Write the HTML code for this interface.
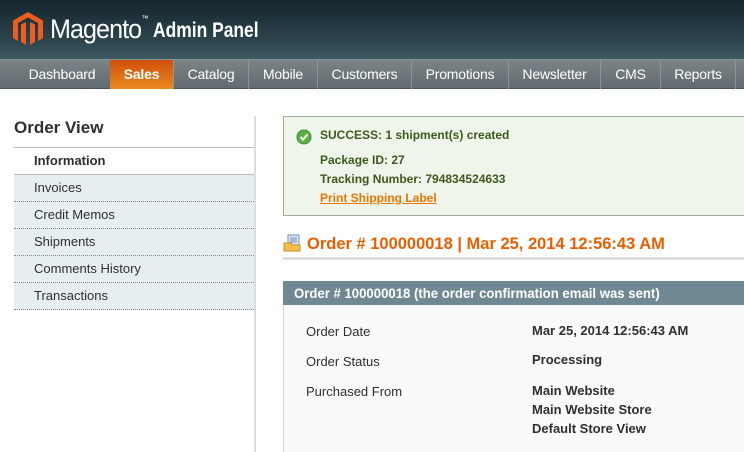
<!DOCTYPE html>
<html><head><style>
*{margin:0;padding:0;box-sizing:border-box}
body{width:744px;height:452px;overflow:hidden;background:#fff;font-family:"Liberation Sans",Arial,sans-serif;position:relative}
.hdr{position:absolute;left:0;top:0;width:744px;height:59px;background:linear-gradient(#14252c,#2e454e 70%,#3d5962)}
.nav{position:absolute;left:0;top:59px;width:744px;height:30px;background:linear-gradient(#7a8487,#626c70);border-top:1px solid #87969a;border-bottom:1px solid #4a5356}
.nav span{position:absolute;top:0;height:29px;line-height:28px;color:#fff;font-size:14px;text-align:center;border-right:1px solid #8a9497;letter-spacing:-0.2px}
.nav .act{background:linear-gradient(#cf4f0b,#ea8920);font-weight:bold}
.sb{position:absolute;left:14px;top:116px;width:242px;border-right:2px solid #ddd;height:336px}
.sb h2{font-size:17px;color:#2f2f2f;padding:2px 0 0 0;height:32px;border-bottom:1px solid #bbb}
.sb div{height:27px;line-height:26px;padding-left:20px;font-size:13px;color:#2f2f2f;background:#e7eef0;border-bottom:1px dotted #888}
.sb .cur{background:#fff;font-weight:bold;border-bottom:1px solid #bbb}
.msg{position:absolute;left:283px;top:116px;width:470px;height:100px;background:#eff5ea;border:1px solid #9fae94;color:#3d5a1e;font-size:12px;font-weight:bold}
.msg p{position:absolute;left:36px}
</style></head><body>
<div class="hdr">
<svg style="position:absolute;left:13px;top:12px" width="30" height="34" viewBox="0 0 30 34"><path d="M15 0 L30 8.5 V26 L25 29 V11 L15 5.5 L5 11 V29 L0 26 V8.5Z M8 12.5 L13 10 V33 L10 31 L8 30Z M22 12.5 L17 10 V33 L20 31 L22 30Z" fill="#ef5c1f"/></svg>
<div style="position:absolute;left:50px;top:14px;color:#fff;font-size:27px;letter-spacing:-1px;transform:scaleX(0.93);transform-origin:left">Magento<span style="font-size:8px;vertical-align:top;letter-spacing:0">™</span></div>
<div style="position:absolute;left:153px;top:19px;color:#fff;font-size:21px;font-weight:bold;transform:scaleX(0.83);transform-origin:left">Admin Panel</div>
</div>
<div class="nav">
<span style="left:14px;width:97px">Dashboard</span>
<span class="act" style="left:110px;width:64px">Sales</span>
<span style="left:174px;width:75px">Catalog</span>
<span style="left:249px;width:69px">Mobile</span>
<span style="left:318px;width:94px">Customers</span>
<span style="left:412px;width:97px">Promotions</span>
<span style="left:509px;width:92px">Newsletter</span>
<span style="left:601px;width:60px">CMS</span>
<span style="left:661px;width:75px">Reports</span>
</div>
<div class="sb">
<h2>Order View</h2>
<div class="cur">Information</div>
<div>Invoices</div><div>Credit Memos</div><div>Shipments</div><div>Comments History</div><div>Transactions</div>
</div>
<div class="msg">
<svg style="position:absolute;left:12px;top:12px" width="16" height="16"><circle cx="8" cy="8" r="7" fill="#5cb045" stroke="#3d8a2d"/><path d="M4.5 8 L7 10.5 L11.5 5.5" stroke="#fff" stroke-width="2" fill="none"/></svg>
<p style="top:11px">SUCCESS: 1 shipment(s) created</p>
<p style="top:36px">Package ID: 27</p>
<p style="top:55px">Tracking Number: 794834524633</p>
<p style="top:74px;color:#ea7601;text-decoration:underline">Print Shipping Label</p>
</div>
<svg style="position:absolute;left:283px;top:234px" width="18" height="18"><rect x="5" y="1" width="11" height="12" fill="#dfe9f5" stroke="#6a8bb8"/><path d="M7 4h7M7 6h7M7 8h7" stroke="#6a8bb8"/><path d="M1 9h7l1 2h8v6H1z" fill="#f4c04b" stroke="#c98e1d"/></svg>
<div style="position:absolute;left:307px;top:234px;color:#eb5e00;font-size:17px;font-weight:bold;transform:scaleX(0.97);transform-origin:left">Order # 100000018 | Mar 25, 2014 12:56:43 AM</div>
<div style="position:absolute;left:283px;top:257px;width:461px;height:3px;background:#ddd"></div>
<div style="position:absolute;left:283px;top:281px;width:461px;height:24px;background:#6f8892;color:#fff;font-size:14px;font-weight:bold;line-height:24px;padding-left:11px"><span style="display:inline-block;transform:scaleX(0.94);transform-origin:left">Order # 100000018 (the order confirmation email was sent)</span></div>
<div style="position:absolute;left:283px;top:305px;width:461px;height:147px;background:#fafafa;border-left:1px solid #d5d5d5;font-size:13px;color:#2f2f2f">
<div style="position:absolute;left:22px;top:19px">Order Date</div>
<div style="position:absolute;left:22px;top:49px">Order Status</div>
<div style="position:absolute;left:22px;top:79px">Purchased From</div>
<div style="position:absolute;left:248px;top:16px;font-weight:bold;line-height:19px">Mar 25, 2014 12:56:43 AM</div>
<div style="position:absolute;left:248px;top:47px;font-weight:bold">Processing</div>
<div style="position:absolute;left:248px;top:76px;font-weight:bold;line-height:19px">Main Website<br>Main Website Store<br>Default Store View</div>
</div>
</body></html>
